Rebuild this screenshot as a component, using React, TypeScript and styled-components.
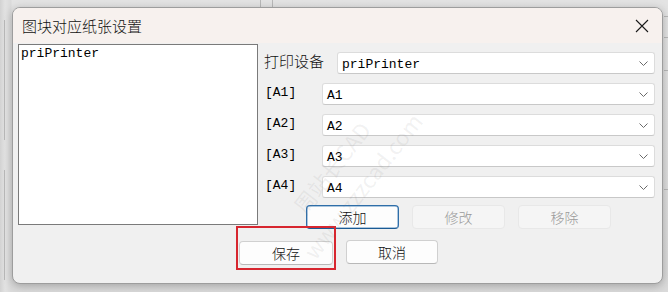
import React from "react";
import styled, { createGlobalStyle } from "styled-components";

const Global = createGlobalStyle`
  html, body { margin: 0; padding: 0; }
  body {
    width: 668px;
    height: 292px;
    overflow: hidden;
    background: #dcdcdc;
    font-family: "Noto Sans CJK SC", "Noto Sans", sans-serif;
  }
`;

const Screen = styled.div`
  position: relative;
  width: 668px;
  height: 292px;
  box-sizing: border-box;
  padding: 7px 5px 8px 12px;
  overflow: hidden;
  background:
    linear-gradient(90deg, #d2d2d2 0px, #e2e2e2 5px, #dadada 11px, transparent 12px),
    linear-gradient(180deg, #e3e3e3 0, #dadada 100%);
`;

const BackLine = styled.div<{ $x: number; $y: number; $w: number; $h: number }>`
  position: absolute;
  left: ${(p) => p.$x}px;
  top: ${(p) => p.$y}px;
  width: ${(p) => p.$w}px;
  height: ${(p) => p.$h}px;
  background: #b8b8b8;
`;

const Dialog = styled.div`
  position: relative;
  box-sizing: border-box;
  width: 651px;
  height: 277px;
  border: 1px solid #9d9d9d;
  border-radius: 8px;
  background: #f0f0f0;
  overflow: hidden;
  display: flex;
  flex-direction: column;
  box-shadow: 0 2px 8px rgba(0, 0, 0, 0.25);
`;

const TitleBar = styled.div`
  height: 35px;
  flex: none;
  display: flex;
  align-items: center;
  justify-content: space-between;
  padding: 0 13px 0 9px;
  background: #f7f1ee;
`;

const Title = styled.div`
  font-size: 15px;
  font-weight: 300;
  color: #111;
  margin-top: -1px;
`;

const CloseIcon = styled.svg`
  width: 14px;
  height: 14px;
  margin-top: 1px;
`;

const Body = styled.div`
  display: flex;
  flex-direction: column;
  padding: 1px 7px 0 5px;
`;

const TopRow = styled.div`
  display: flex;
  align-items: flex-start;
`;

const ListBox = styled.div`
  box-sizing: border-box;
  width: 240px;
  height: 181px;
  background: #ffffff;
  border: 1px solid #7a7a7a;
  padding: 1px 2px;
`;

const MonoText = styled.div`
  font-family: "Liberation Mono", "Noto Sans CJK SC", monospace;
  font-size: 13px;
  line-height: 16px;
  color: #000;
`;

const Form = styled.div`
  flex: 1;
  display: flex;
  flex-direction: column;
  gap: 9px;
  padding: 8px 0 0 6px;
`;

const FieldRow = styled.div<{ $labelWidth: number }>`
  display: grid;
  grid-template-columns: ${(p) => p.$labelWidth}px 1fr;
  align-items: center;
  height: 22px;
`;

const CnLabel = styled.div`
  font-size: 15px;
  font-weight: 300;
  color: #111;
  margin-top: -6px;
`;

const CodeLabel = styled.div`
  font-family: "Liberation Mono", "Noto Sans CJK SC", monospace;
  font-size: 13px;
  color: #000;
  margin-top: -4px;
  padding-left: 1px;
`;

const Select = styled.div`
  box-sizing: border-box;
  height: 22px;
  background: #ffffff;
  border: 1px solid #dcdcdc;
  border-bottom-color: #c8c8c8;
  border-radius: 3px;
  display: flex;
  align-items: center;
  justify-content: space-between;
  padding: 0 6px 0 4px;
`;

const SelectText = styled.span`
  font-family: "Liberation Mono", "Noto Sans CJK SC", monospace;
  font-size: 13px;
  color: #000;
  margin-top: 3px;
`;

const Chevron = styled.svg`
  width: 9px;
  height: 5px;
`;

const ActionRow = styled.div`
  display: flex;
  gap: 13px;
  padding-left: 42px;
  margin-top: -2px;
`;

const Button = styled.button<{ $variant?: "default" | "focus" | "disabled"; $w: number }>`
  box-sizing: border-box;
  width: ${(p) => p.$w}px;
  height: 24px;
  border-radius: 4px;
  font-family: "Noto Sans CJK SC", sans-serif;
  font-size: 14px;
  font-weight: 300;
  padding: 0;
  line-height: 20px;
  background: ${(p) => (p.$variant === "disabled" ? "#f5f5f5" : "#fdfdfd")};
  color: ${(p) => (p.$variant === "disabled" ? "#9a9a9a" : "#111")};
  border: 1px solid
    ${(p) =>
      p.$variant === "focus" ? "#2f6ea8" : p.$variant === "disabled" ? "#e8e8e8" : "#d0d0d0"};
  border-bottom-color: ${(p) =>
    p.$variant === "focus" ? "#1a5a94" : p.$variant === "disabled" ? "#e8e8e8" : "#b8b8b8"};
  box-shadow: ${(p) => (p.$variant === "focus" ? "inset 0 0 0 0.5px #5b8fc0" : "none")};
`;

const BottomRow = styled.div`
  display: flex;
  gap: 13px;
  padding-left: 221px;
  margin-top: 11px;
`;

const Highlight = styled.div`
  position: relative;
`;

const RedBox = styled.div`
  position: absolute;
  left: -3px;
  right: -3px;
  top: -14px;
  bottom: -5px;
  border: 2px solid #d7262f;
  pointer-events: none;
`;

const Watermark = styled.div<{ $x: number; $y: number }>`
  position: absolute;
  left: ${(p) => p.$x}px;
  top: ${(p) => p.$y}px;
  transform: rotate(-52deg);
  transform-origin: left top;
  font-family: "Noto Sans CJK SC", sans-serif;
  font-size: 22px;
  color: rgba(120, 120, 120, 0.1);
  white-space: nowrap;
  pointer-events: none;
`;

const fields = [
  { code: "[A1]", value: "A1" },
  { code: "[A2]", value: "A2" },
  { code: "[A3]", value: "A3" },
  { code: "[A4]", value: "A4" },
];

const ChevronDown = () => (
  <Chevron viewBox="0 0 9 5">
    <path d="M0.5 0.5 L4.5 4.5 L8.5 0.5" fill="none" stroke="#6a6a6a" strokeWidth="1" />
  </Chevron>
);

export default function App() {
  return (
    <>
      <Global />
      <Screen>
        <BackLine $x={260} $y={0} $w={1} $h={7} />
        <BackLine $x={272} $y={0} $w={1} $h={7} />
        <BackLine $x={664} $y={16} $w={4} $h={1} />
        <BackLine $x={664} $y={37} $w={4} $h={1} />
        <BackLine $x={664} $y={70} $w={4} $h={1} />
        <BackLine $x={664} $y={189} $w={4} $h={1} />
        <BackLine $x={4} $y={20} $w={1} $h={120} />
        <BackLine $x={4} $y={170} $w={1} $h={110} />
        <Dialog>
          <TitleBar>
            <Title>图块对应纸张设置</Title>
            <CloseIcon viewBox="0 0 14 14">
              <path d="M1 1 L13 13 M13 1 L1 13" stroke="#1a1a1a" strokeWidth="1.1" fill="none" />
            </CloseIcon>
          </TitleBar>
          <Body>
            <TopRow>
              <ListBox>
                <MonoText>priPrinter</MonoText>
              </ListBox>
              <Form>
                <FieldRow $labelWidth={73}>
                  <CnLabel>打印设备</CnLabel>
                  <Select>
                    <SelectText>priPrinter</SelectText>
                    <ChevronDown />
                  </Select>
                </FieldRow>
                {fields.map((f) => (
                  <FieldRow key={f.code} $labelWidth={58}>
                    <CodeLabel>{f.code}</CodeLabel>
                    <Select>
                      <SelectText>{f.value}</SelectText>
                      <ChevronDown />
                    </Select>
                  </FieldRow>
                ))}
                <ActionRow>
                  <Button $variant="focus" $w={93}>添加</Button>
                  <Button $variant="disabled" $w={93}>修改</Button>
                  <Button $variant="disabled" $w={93}>移除</Button>
                </ActionRow>
              </Form>
            </TopRow>
            <BottomRow>
              <Highlight>
                <Button $w={94}>保存</Button>
                <RedBox />
              </Highlight>
              <Button $w={92}>取消</Button>
            </BottomRow>
          </Body>
        </Dialog>
        <Watermark $x={295} $y={245}>www.zzzcad.com</Watermark>
        <Watermark $x={285} $y={200}>周站长CAD</Watermark>
      </Screen>
    </>
  );
}
